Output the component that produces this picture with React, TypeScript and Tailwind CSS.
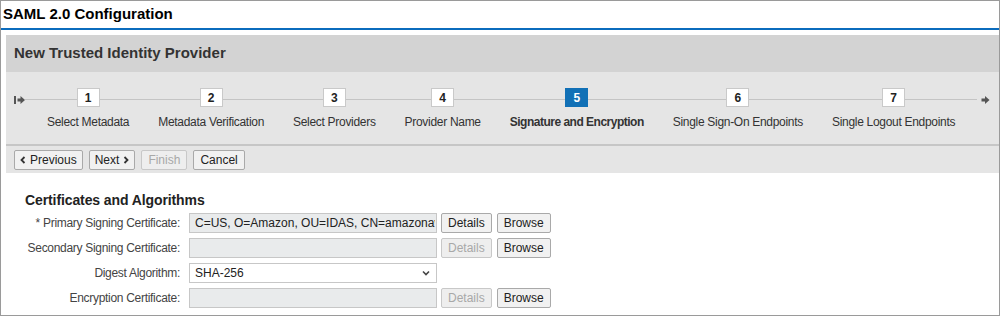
import React from 'react';

const steps = [
  'Select Metadata',
  'Metadata Verification',
  'Select Providers',
  'Provider Name',
  'Signature and Encryption',
  'Single Sign-On Endpoints',
  'Single Logout Endpoints',
];

const Btn: React.FC<{ children: React.ReactNode; disabled?: boolean; className?: string }> = ({ children, disabled, className }) => (
  <button
    className={`h-[20px] border rounded-[2px] text-[12px] leading-none flex items-center gap-[4px] ${
      disabled ? 'bg-[#eeeeee] text-[#a8a8a8] border-[#c8c8c8]' : 'bg-[#f1f1f1] text-[#222] border-[#a9a9a9]'
    } ${className ?? 'px-[6px]'}`}
  >
    {children}
  </button>
);

const Chevron: React.FC<{ dir: 'left' | 'right' }> = ({ dir }) => (
  <svg width="6" height="8" viewBox="0 0 6 8">
    <path
      d={dir === 'left' ? 'M4.5 1 L1.5 4 L4.5 7' : 'M1.5 1 L4.5 4 L1.5 7'}
      fill="none"
      stroke="#333"
      strokeWidth="1.8"
    />
  </svg>
);

const FormRow: React.FC<{ label: string; children: React.ReactNode }> = ({ label, children }) => (
  <div className="flex items-center h-[20px]">
    <div className="w-[155px] text-right text-[12px] text-[#444] tracking-[-0.3px] whitespace-nowrap">{label}</div>
    <div className="ml-[9px] flex items-center gap-[4px]">{children}</div>
  </div>
);

const App: React.FC = () => {
  return (
    <div className="w-[1000px] h-[316px] border border-[#9a9a9a] bg-white overflow-hidden font-['Liberation_Sans',Arial,sans-serif] text-[#333]">
      {/* Title */}
      <div className="h-[29px] border-b-2 border-[#0b6cbd] px-[2px] flex items-center">
        <span className="text-[15px] font-bold text-black">SAML 2.0 Configuration</span>
      </div>

      <div className="pl-[5px] pt-[5px]">
        <div className="bg-[#e5e5e5]">
          {/* Header */}
          <div className="h-[37px] bg-[#d3d3d3] flex items-center pl-[8px]">
            <span className="text-[15px] font-bold text-[#333]">New Trusted Identity Provider</span>
          </div>

          {/* Stepper */}
          <div className="relative h-[74px] border-b-2 border-[#c6c6c6]">
            <div className="absolute left-[19px] right-[22px] top-[27px] h-px bg-[#c4c4c4]" />
            <svg className="absolute left-[8px] top-[23px]" width="12" height="10" viewBox="0 0 12 10">
              <rect x="0" y="1" width="2" height="8" fill="#555" />
              <path d="M3.5 3.5 H6.5 V1 L11 5 L6.5 9 V6.5 H3.5 Z" fill="#555" />
            </svg>
            <svg className="absolute right-[9px] top-[23px]" width="9" height="10" viewBox="0 0 9 10">
              <path d="M0.5 3.5 H4 V1 L8.5 5 L4 9 V6.5 H0.5 Z" fill="#555" />
            </svg>
            <div className="relative flex gap-[29px] pl-[41px] pt-[16px]">
              {steps.map((s, i) => {
                const active = i === 4;
                return (
                  <div key={s} className="flex flex-col items-center">
                    <div
                      className={`w-[23px] h-[19px] border flex items-center justify-center text-[12px] font-bold ${
                        active ? 'bg-[#1170b6] border-[#1170b6] text-white' : 'bg-white border-[#c9c9c9] text-[#222]'
                      }`}
                    >
                      {i + 1}
                    </div>
                    <div
                      className={`mt-[6px] text-[12px] whitespace-nowrap text-[#333] ${
                        active ? 'font-bold tracking-[-0.5px]' : 'tracking-[-0.3px]'
                      }`}
                    >
                      {s}
                    </div>
                  </div>
                );
              })}
            </div>
          </div>

          {/* Buttons */}
          <div className="h-[27px] flex items-center gap-[6px] pl-[8px]">
            <Btn className="px-[5px]">
              <Chevron dir="left" />
              Previous
            </Btn>
            <Btn className="px-[5px]">
              Next
              <Chevron dir="right" />
            </Btn>
            <Btn disabled>Finish</Btn>
            <Btn>Cancel</Btn>
          </div>
        </div>

        {/* Form */}
        <div className="pl-[19px] pt-[17px]">
          <div className="text-[14px] font-bold text-[#222] mb-[2px] tracking-[-0.1px]">Certificates and Algorithms</div>
          <div className="flex flex-col gap-[5px]">
            <FormRow label="* Primary Signing Certificate:">
              <div className="w-[248px] h-[20px] border border-[#c7c7c7] bg-[#e9ebec] pl-[5px] text-[12px] text-[#222] flex items-center overflow-hidden">
                <span className="block w-[240px] overflow-hidden whitespace-nowrap">C=US, O=Amazon, OU=IDAS, CN=amazonaws</span>
              </div>
              <Btn>Details</Btn>
              <Btn className="px-[6px] ml-[1px]">Browse</Btn>
            </FormRow>
            <FormRow label="Secondary Signing Certificate:">
              <div className="w-[248px] h-[20px] border border-[#c7c7c7] bg-[#e9ebec]" />
              <Btn disabled>Details</Btn>
              <Btn className="px-[6px] ml-[1px]">Browse</Btn>
            </FormRow>
            <FormRow label="Digest Algorithm:">
              <div className="w-[248px] h-[20px] border border-[#c7c7c7] bg-white px-[5px] text-[12px] text-[#222] flex items-center justify-between">
                SHA-256
                <svg width="8" height="6" viewBox="0 0 8 6" className="mr-[1px]">
                  <path d="M1 1.5 L4 4.5 L7 1.5" fill="none" stroke="#444" strokeWidth="1.6" />
                </svg>
              </div>
            </FormRow>
            <FormRow label="Encryption Certificate:">
              <div className="w-[248px] h-[20px] border border-[#c7c7c7] bg-[#e9ebec]" />
              <Btn disabled>Details</Btn>
              <Btn className="px-[6px] ml-[1px]">Browse</Btn>
            </FormRow>
          </div>
        </div>
      </div>
    </div>
  );
};

export default App;
